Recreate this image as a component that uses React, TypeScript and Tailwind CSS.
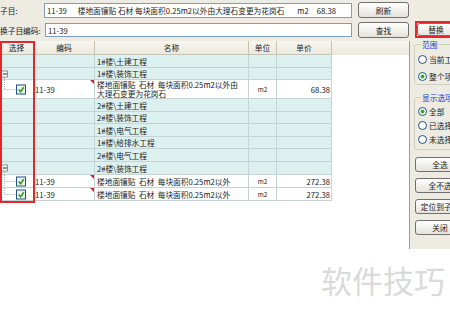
import React from "react";

const font = "font-['Noto_Sans_CJK_SC','Noto_Sans_CJK_JP',sans-serif]";

type Row = {
  h: number;
  name?: string;
  lines?: string[];
  code?: string;
  unit?: string;
  price?: string;
  tree?: "minus" | "tee" | "end";
};

const rows: Row[] = [
  { h: 13, name: "1#楼\\土建工程" },
  { h: 12, name: "1#楼\\装饰工程", tree: "minus" },
  {
    h: 19,
    lines: ["楼地面镶贴  石材  每块面积0.25m2以外由", "大理石变更为花岗石"],
    code: "11-39",
    unit: "m2",
    price: "68.38",
    tree: "end",
  },
  { h: 13, name: "2#楼\\土建工程" },
  { h: 12, name: "2#楼\\装饰工程" },
  { h: 13, name: "1#楼\\电气工程" },
  { h: 12, name: "1#楼\\给排水工程" },
  { h: 13, name: "2#楼\\电气工程" },
  { h: 13, name: "2#楼\\装饰工程", tree: "minus" },
  { h: 13, lines: ["楼地面镶贴  石材  每块面积0.25m2以外"], code: "11-39", unit: "m2", price: "272.38", tree: "tee" },
  { h: 13, lines: ["楼地面镶贴  石材  每块面积0.25m2以外"], code: "11-39", unit: "m2", price: "272.38", tree: "end" },
];

const heightClass: Record<number, string> = {
  12: "h-[12px]",
  13: "h-[13px]",
  19: "h-[19px]",
};

function TreeMark({ tree, h }: { tree?: Row["tree"]; h: number }) {
  if (!tree) return null;
  const c = Math.floor(h / 2) + 0.5;
  return (
    <svg width={33} height={h - 1} className="block">
      {tree === "minus" && (
        <>
          <line x1={4.5} y1={c + 3.5} x2={4.5} y2={h} stroke="#a8a8a8" strokeDasharray="1 1" />
          <rect x={1.5} y={c - 3.5} width={6} height={6} fill="#fff" stroke="#8f8f8f" />
          <line x1={3} y1={c - 0.5} x2={7} y2={c - 0.5} stroke="#222" />
        </>
      )}
      {(tree === "tee" || tree === "end") && (
        <>
          <line x1={4.5} y1={0} x2={4.5} y2={tree === "tee" ? h : c} stroke="#a8a8a8" strokeDasharray="1 1" />
          <line x1={4.5} y1={c} x2={16} y2={c} stroke="#a8a8a8" strokeDasharray="1 1" />
          <rect x={16.5} y={c - 4.5} width={9} height={9} fill="#f3f3ec" stroke="#1c5180" />
          <polyline
            points={`18.6,${c} 20.6,${c + 2.2} 23.8,${c - 2.2}`}
            fill="none"
            stroke="#21a121"
            strokeWidth={1.6}
          />
        </>
      )}
    </svg>
  );
}

function Radio({ on, label }: { on?: boolean; label: string }) {
  return (
    <div className="flex h-[9px] items-center gap-[2px] whitespace-nowrap">
      <svg width={9} height={9} className="block shrink-0">
        <circle cx={4.5} cy={4.5} r={4} fill="#fff" stroke="#1c5180" />
        {on && <circle cx={4.5} cy={4.5} r={2} fill="#2eae2e" />}
      </svg>
      <span>{label}</span>
    </div>
  );
}

function XpButton({ label, className = "" }: { label: string; className?: string }) {
  return (
    <div
      className={`flex items-center justify-center rounded-[3px] border border-[#707070] bg-gradient-to-b from-white to-[#e5e3db] whitespace-nowrap ${className}`}
    >
      {label}
    </div>
  );
}

export default function App() {
  return (
    <div className={`relative w-[450px] h-[317px] overflow-hidden bg-white text-[7.7px] leading-[9px] text-[#1a1a1a] ${font}`}>
      <div className="flex">
        <div className="w-[410px]">
          {/* top fields */}
          <div className="h-[41px] bg-[#edebe2] pt-[2px]">
            <div className="flex h-[16px] items-center">
              <div className="w-[44px]">子目:</div>
              <div className="flex h-[15px] w-[308px] items-center border border-[#7f9db9] bg-white pl-[2px] whitespace-nowrap">
                <span>11-39</span>
                <span className="ml-[11px]">楼地面镶贴 石材 每块面积0.25m2以外由大理石变更为花岗石</span>
                <span className="ml-[13px]">m2</span>
                <span className="ml-[8px]">68.38</span>
              </div>
              <XpButton label="刷新" className="ml-[6px] h-[16px] w-[51px]" />
            </div>
            <div className="mt-[4px] flex h-[16px] items-center">
              <div className="w-[45px] whitespace-nowrap">换子目编码:</div>
              <div className="flex h-[14px] w-[307px] items-center border border-[#7f9db9] bg-white pl-[2px]">
                11-39
              </div>
              <XpButton label="查找" className="ml-[6px] h-[16px] w-[51px]" />
            </div>
          </div>

          {/* grid */}
          <div className="relative h-[208px] border-r border-[#9d9d94] bg-white">
            <div className="flex h-[14px] bg-gradient-to-b from-[#f7f6f1] to-[#ebe8db]">
              {[
                ["选择", "w-[34px]"],
                ["编码", "w-[61px]"],
                ["名称", "w-[154px]"],
                ["单位", "w-[28px]"],
                ["单价", "w-[55px]"],
              ].map(([t, w]) => (
                <div key={t} className={`${w} flex shrink-0 items-center justify-center border-r border-b border-[#c9c4b1]`}>
                  {t}
                </div>
              ))}
            </div>
            {rows.map((r, i) => {
              const item = !!r.code;
              const bg = item ? "bg-white" : "bg-[#ddf0f0]";
              const cell = `shrink-0 border-r border-b border-[#c4d4d4] ${bg}`;
              return (
                <div key={i} className={`flex ${heightClass[r.h]}`}>
                  <div className={`w-[34px] ${cell}`}>
                    <TreeMark tree={r.tree} h={r.h} />
                  </div>
                  <div className={`relative flex w-[61px] items-center pl-[1px] ${cell}`}>
                    {r.code}
                    {item && (
                      <span className="absolute right-0 top-0 h-0 w-0 border-t-[4px] border-l-[4px] border-t-[#d42020] border-l-transparent" />
                    )}
                  </div>
                  <div className={`flex w-[154px] flex-col justify-center pl-[2px] whitespace-pre ${cell}`}>
                    {r.name ? r.name : r.lines?.map((l) => <div key={l}>{l}</div>)}
                  </div>
                  <div className={`flex w-[28px] items-center justify-center text-[6.5px] ${cell}`}>{r.unit}</div>
                  <div className={`flex w-[55px] items-center justify-end pr-[1px] ${cell}`}>{r.price}</div>
                </div>
              );
            })}
            <div className="pointer-events-none absolute left-0 top-0 h-[162px] w-[35px] border-2 border-[#e3282c]" />
          </div>
        </div>

        {/* right panel */}
        <div className="h-[249px] w-[40px] overflow-hidden bg-[#edebe2]">
          <div className="w-[80px] pl-[4px] pt-[21px]">
            <div className="ml-[1px] flex h-[17px] w-[42px] border-2 border-[#e3282c]">
              <XpButton label="替换" className="flex-1" />
            </div>
            <fieldset className="mt-[2px] w-[70px] rounded-[3px] border border-[#d0d0bf] pb-[3px] pl-[3px]">
              <legend className="ml-[3px] px-[1px] text-[#0046d5]">范围</legend>
              <div className="mt-[6px] flex flex-col gap-[8px]">
                <Radio label="当前工程" />
                <Radio on label="整个项目" />
              </div>
            </fieldset>
            <fieldset className="mt-[8px] w-[70px] rounded-[3px] border border-[#d0d0bf] pb-[5px] pl-[3px]">
              <legend className="ml-[3px] px-[1px] text-[#0046d5]">显示选项</legend>
              <div className="mt-[5px] flex flex-col gap-[5px]">
                <Radio on label="全部" />
                <Radio label="已选择" />
                <Radio label="未选择" />
              </div>
            </fieldset>
            <div className="ml-[1px] mt-[7px] flex flex-col gap-[6px]">
              <XpButton label="全选" className="h-[15px] w-[50px]" />
              <XpButton label="全不选" className="h-[15px] w-[50px]" />
              <XpButton label="定位到子目" className="h-[15px] w-[50px]" />
              <XpButton label="关闭" className="h-[15px] w-[50px]" />
            </div>
          </div>
        </div>
      </div>

      <div className="pointer-events-none absolute left-[321px] top-[262px] text-[31px] leading-[36px] text-[#dadada]">
        软件技巧
      </div>
    </div>
  );
}
